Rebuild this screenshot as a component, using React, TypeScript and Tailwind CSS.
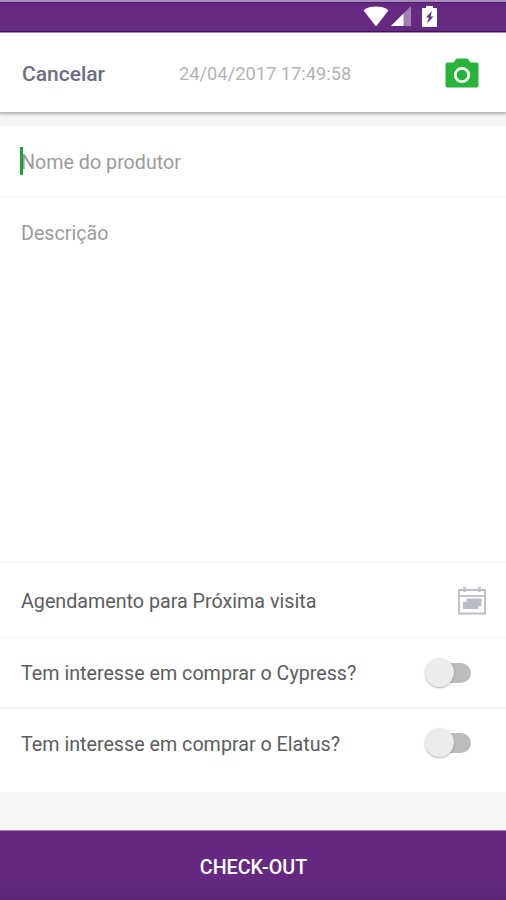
import React, { useState } from 'react';

const StatusBar: React.FC = () => (
  <div className="h-[33px] shrink-0 border-t-2 border-b border-t-[#a98bb8] border-b-[#b494c2] bg-[#662a80]">
    <div className="flex h-[30px] items-start justify-end border-t border-b border-t-[#521a6b] border-b-[#4c0d68] pr-[69px] pt-[3px]">
      <svg width="26" height="21" viewBox="0 0 26 21" fill="#fff" className="mr-[2px]">
        <path d="M0.5 4.2C4 1.6 8 0.5 13 0.5s9 1.1 12.500 3.700L13 20.500Z" />
      </svg>
      <svg width="20" height="20" viewBox="0 0 20 20" fill="#fff" className="mr-[11px]">
        <path d="M20 0V20H0Z" opacity=".4" />
        <path d="M12.500 7.500V20H0Z" />
      </svg>
      <svg width="15" height="21" viewBox="0 0 15 21">
        <path d="M4 0h7v2H14a1 1 0 0 1 1 1v17a1 1 0 0 1-1 1H1a1 1 0 0 1-1-1V3a1 1 0 0 1 1-1h3Z" fill="#fff" />
        <path d="M10 5 4 11.500h3L5 17.500 11.500 10.500H8.500Z" fill="#662a80" />
      </svg>
    </div>
  </div>
);

const CameraIcon: React.FC = () => (
  <svg width="34" height="30" viewBox="0 0 34 30">
    <path
      d="M12.500 0.500h9a2 2 0 0 1 1.600.8L25.500 4.500H31.500a2 2 0 0 1 2 2V27.500a2 2 0 0 1-2 2H2.500a2 2 0 0 1-2-2V6.500a2 2 0 0 1 2-2H8.500l2.400-3.200a2 2 0 0 1 1.600-.8Z"
      fill="#2bb23c"
    />
    <circle cx="17" cy="17" r="6.700" fill="none" stroke="#f2fff2" strokeWidth="2.800" />
  </svg>
);

const CalendarIcon: React.FC = () => (
  <svg width="28" height="28" viewBox="0 0 28 28" fill="none" stroke="#bbbdc6" strokeWidth="1.800">
    <path d="M1 3H27V26.500H1Z" />
    <path d="M1 9H27" />
    <path d="M6.500 0V5M21.500 0V5" strokeWidth="2.500" />
    <path d="M8.500 11.500H23.500V19H20.500V22H5V15H8.500Z" fill="#b8bbc8" stroke="none" />
  </svg>
);

interface SwitchProps {
  label: string;
  checked: boolean;
  onChange: (value: boolean) => void;
}

const Switch: React.FC<SwitchProps> = ({ label, checked, onChange }) => (
  <button
    role="switch"
    aria-checked={checked}
    aria-label={label}
    onClick={() => onChange(!checked)}
    className="relative mr-[15px] h-5 w-[44px] shrink-0 rounded-full bg-[#bcbcbc]"
  >
    <span
      className={`absolute -top-[5px] h-[29px] w-[29px] rounded-full bg-[#ececec] shadow-[0_1px_2px_rgba(0,0,0,0.3)] ${checked ? '-right-[3px]' : '-left-[2px]'}`}
    />
  </button>
);

const App: React.FC = () => {
  const [cypress, setCypress] = useState(false);
  const [elatus, setElatus] = useState(false);

  return (
    <div className="flex h-[900px] w-[506px] flex-col overflow-hidden bg-[#f5f5f5] font-['Roboto','Liberation_Sans',sans-serif] text-[19.7px] text-[#5c5d61]">
      <StatusBar />

      <header className="z-10 flex h-[79px] shrink-0 items-center bg-white pl-[22px] pr-[27px] pt-0.5 shadow-[0_1px_3px_1px_rgba(0,0,0,0.3)]">
        <button className="w-[157px] pt-0.5 text-left text-[21px] font-medium text-[#6d6e82]">Cancelar</button>
        <span className="flex-1 text-[18.3px] text-[#b3b3b3]">24/04/2017 17:49:58</span>
        <button aria-label="Camera" className="pb-0.5">
          <CameraIcon />
        </button>
      </header>

      <main className="mt-[14px] flex h-[666px] shrink-0 flex-col bg-white">
        <div className="relative flex h-[71px] items-center border-b border-[#f1f1f1] px-[21px] pt-[3px] text-[#9c9c9c]">
          <span className="absolute left-[20px] top-[21px] h-[28px] w-[3px] bg-[#23a03c]" />
          <span>Nome do produtor</span>
        </div>

        <div className="h-[366px] border-b border-[#f5f5f5] px-[21px] pt-[22px] text-[#9c9c9c]">Descrição</div>

        <div className="flex h-[75px] items-center justify-between border-b border-[#f7f7f7] pl-[21px] pr-5 pt-0.5">
          <span className="pt-0.5">Agendamento para Próxima visita</span>
          <CalendarIcon />
        </div>

        <div className="flex h-[71px] items-center justify-between border-b-2 border-[#f5f5f5] pl-[21px] pr-5">
          <span className="pt-[3px]">Tem interesse em comprar o Cypress?</span>
          <Switch label="Cypress" checked={cypress} onChange={setCypress} />
        </div>

        <div className="flex h-[68px] items-center justify-between pl-[21px] pr-5">
          <span className="pt-[3px]">Tem interesse em comprar o Elatus?</span>
          <Switch label="Elatus" checked={elatus} onChange={setElatus} />
        </div>
      </main>

      <button className="mt-auto flex h-[70px] shrink-0 items-center justify-center border-t border-[#a283b1] bg-linear-to-b from-[#652a80] from-70% to-[#5c2674] pl-px pt-[5px] text-[19.7px] font-medium text-white">
        CHECK-OUT
      </button>
    </div>
  );
};

export default App;
